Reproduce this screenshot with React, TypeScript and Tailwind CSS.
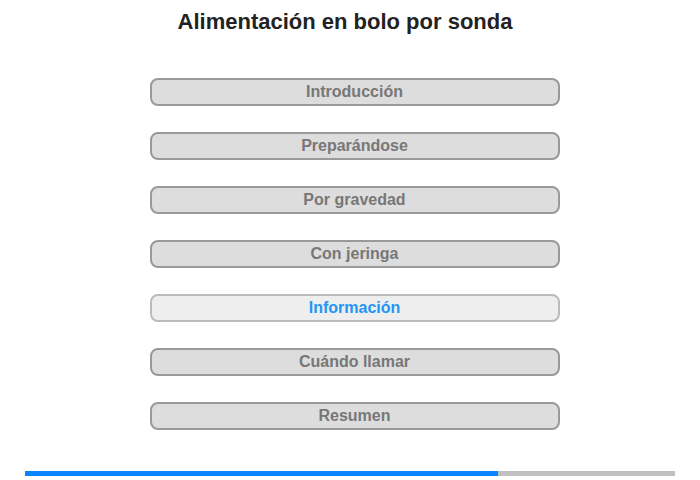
const sections = [
  'Introducción',
  'Preparándose',
  'Por gravedad',
  'Con jeringa',
  'Información',
  'Cuándo llamar',
  'Resumen',
];

const ACTIVE = 4;

export default function App() {
  return (
    <div className="w-[700px] h-[480px] bg-white flex flex-col items-center font-['Liberation_Sans',Arial,sans-serif]">
      <h1 className="mt-[9px] mr-[10px] h-[26px] text-[22px] leading-[26px] font-bold text-[#222]">
        Alimentación en bolo por sonda
      </h1>

      <nav className="mt-[43px] ml-[9px] flex flex-col gap-[26px]">
        {sections.map((label, i) => {
          const active = i === ACTIVE;
          return (
            <button
              key={label}
              className={
                active
                  ? 'w-[410px] h-[28px] rounded-[8px] border-2 border-[#bbb] bg-[#eee] text-[16px] leading-[24px] font-bold text-[#2196f3]'
                  : 'w-[410px] h-[28px] rounded-[8px] border-2 border-[#999] bg-[#ddd] text-[16px] leading-[24px] font-bold text-[#777]'
              }
            >
              {label}
            </button>
          );
        })}
      </nav>

      <div className="mt-auto mb-[4px] w-[650px] h-[5px] bg-[#c0c0c0] flex">
        <div className="h-full w-[473px] bg-[#0a84ff]" />
      </div>
    </div>
  );
}
